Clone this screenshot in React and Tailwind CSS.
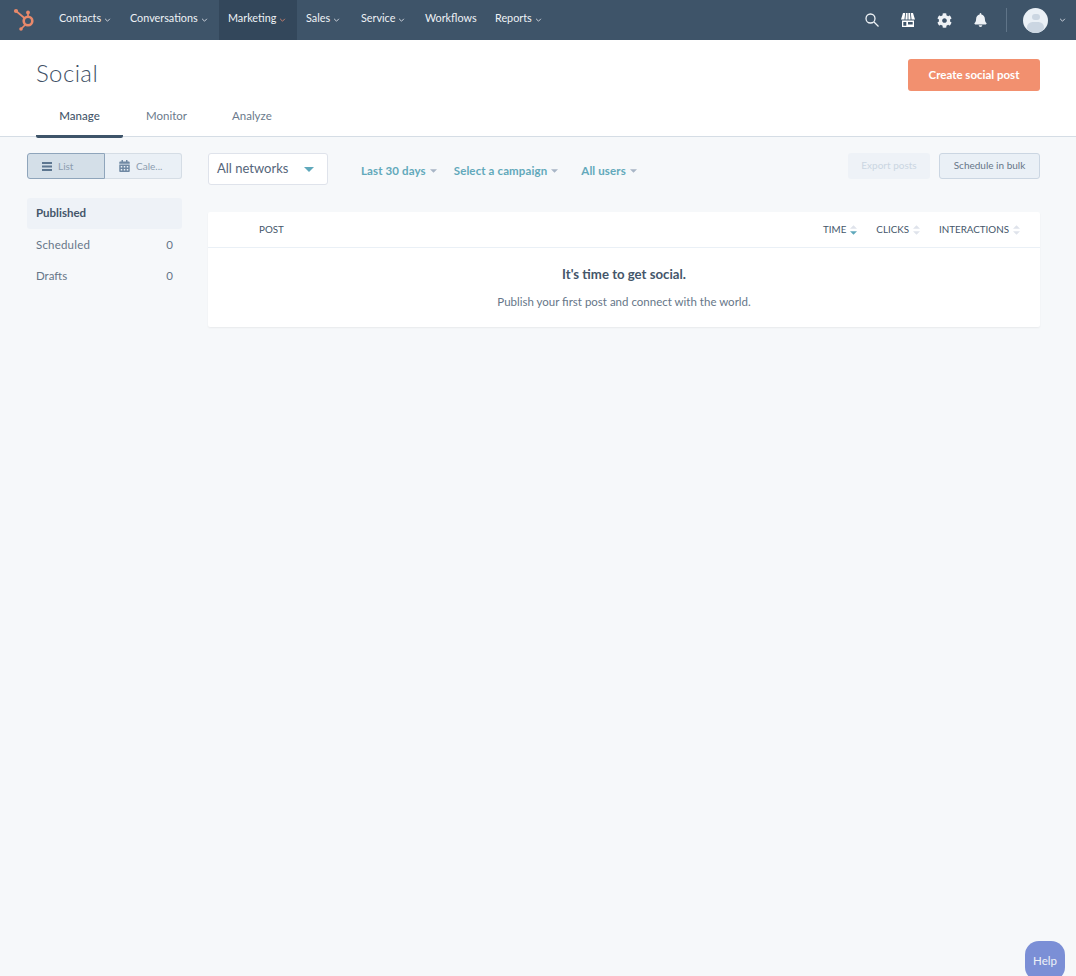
import { FaCog, FaBell, FaCalendarAlt } from "react-icons/fa"

const navItems = [
  { label: "Contacts", w: "w-[71px]", caret: true },
  { label: "Conversations", w: "w-[98px]", caret: true },
  { label: "Marketing", w: "w-[78px]", caret: true, active: true },
  { label: "Sales", w: "w-[55px]", caret: true },
  { label: "Service", w: "w-[64px]", caret: true },
  { label: "Workflows", w: "w-[70px]" },
  { label: "Reports", w: "w-[66px]", caret: true },
]

function Chevron({ className }) {
  return (
    <svg viewBox="0 0 8 5" className={"w-[7px] h-[4px] " + className} fill="none" stroke="currentColor" strokeWidth="1.1">
      <path d="M1 1l3 3 3-3" />
    </svg>
  )
}

function Caret({ className }) {
  return (
    <svg viewBox="0 0 10 5" className={className} fill="currentColor">
      <path d="M0 0h10L5 5z" />
    </svg>
  )
}

// up/down arrows next to table headers
function SortArrows({ down }) {
  return (
    <span className="flex flex-col gap-[2px] ml-[4px]">
      <svg viewBox="0 0 8 4" className="w-[7px] h-[4px] text-[#dfe3eb]" fill="currentColor"><path d="M4 0l4 4H0z" /></svg>
      <svg viewBox="0 0 8 4" className={"w-[7px] h-[4px] " + (down ? "text-[#5fa8bb]" : "text-[#dfe3eb]")} fill="currentColor"><path d="M0 0h8L4 4z" /></svg>
    </span>
  )
}

function Sprocket() {
  return (
    <svg viewBox="0 0 22 24" className="w-[22px] h-[24px] text-[#e8896b]" fill="none" stroke="currentColor">
      <circle cx="15" cy="13" r="4.300" strokeWidth="2.600" />
      <path d="M3 3l9 7.500M15 4.500v5M8 21l4-4" strokeWidth="1.700" />
      <circle cx="3" cy="3" r="2.100" fill="currentColor" stroke="none" />
      <circle cx="15" cy="4.500" r="1.900" fill="currentColor" stroke="none" />
      <circle cx="8" cy="21" r="1.800" fill="currentColor" stroke="none" />
    </svg>
  )
}

function Store() {
  return (
    <svg viewBox="0 0 14 14" className="w-[14px] h-[14px] text-white" fill="currentColor">
      <path d="M2 0h2.200L3.500 6.500H0zM5 0h1.600v6.500H4.400zM7.400 0H9l.6 6.500H7.400zM9.800 0H12l2 6.500h-3.500z" />
      <path fillRule="evenodd" d="M1 7.500h12V14H1zM2.300 9v3.800h3V9zM7 9v2.600h4.700V9z" />
    </svg>
  )
}

function Avatar() {
  return (
    <span className="w-[25px] h-[25px] rounded-full bg-[#eaf0f6] overflow-hidden flex flex-col items-center">
      <span className="w-[8px] h-[8px] rounded-full bg-[#cbd6e2] mt-[6px]" />
      <span className="w-[17px] h-[12px] rounded-full bg-[#cbd6e2] mt-[2px]" />
    </span>
  )
}

function TopNav() {
  return (
    <nav className="h-[40px] bg-[#3e5469] flex items-stretch text-[#eef2f6] text-[10.8px] shrink-0">
      <div className="w-[50px] flex items-center pl-[13px]">
        <Sprocket />
      </div>
      {navItems.map((item) => (
        <a key={item.label} className={"flex items-center pl-[9px] gap-[3px] " + item.w + (item.active ? " bg-[#33475b]" : "")}>
          <span className="-mt-[4px]">{item.label}</span>
          {item.caret && <Chevron className={item.active ? "text-[#d9866f] -mt-[1px]" : "text-[#dfe3eb] -mt-[1px]"} />}
        </a>
      ))}
      <div className="ml-auto flex items-center">
        <svg viewBox="0 0 14 14" className="w-[14px] h-[14px] mr-[22px]" fill="none" stroke="currentColor" strokeWidth="1.300">
          <circle cx="5.500" cy="5.500" r="4.500" />
          <path d="M9 9l4.500 4.500" />
        </svg>
        <span className="mr-[22px]"><Store /></span>
        <FaCog className="w-[15px] h-[15px] mr-[22px]" />
        <FaBell className="w-[13px] h-[14px] mr-[19px]" />
        <span className="w-px h-[24px] bg-[#5f7488] mr-[16px]" />
        <Avatar />
        <Chevron className="text-[#dfe3eb] ml-[11px] mr-[10px]" />
      </div>
    </nav>
  )
}

function PageHeader() {
  return (
    <header className="bg-white h-[97px] border-b border-[#d5dde5] shrink-0 pl-[36px] pr-[36px]">
      <div className="flex justify-between items-start pt-[19px] h-[61px]">
        <h1 className="text-[24px] leading-[28px] font-light text-[#3f5166] tracking-[0.4px]">Social</h1>
        <button className="w-[132px] h-[32px] bg-[#f2906f] rounded-[3px] text-white text-[11.5px] font-bold">Create social post</button>
      </div>
      <div className="flex h-[36px] text-[11.5px]">
        <a className="w-[87px] flex justify-center pt-[6px] h-[37px] border-b-[3px] border-[#3e5469] rounded-b-[2px] text-[#44566a] font-medium">Manage</a>
        <a className="ml-[23px] pt-[6px] text-[#6b7a8c]">Monitor</a>
        <a className="ml-[45px] pt-[6px] text-[#6b7a8c]">Analyze</a>
      </div>
    </header>
  )
}

function Sidebar() {
  return (
    <aside className="w-[155px] shrink-0 text-[11.5px]">
      <div className="flex h-[26px] text-[10px] text-[#8c9db0]">
        <button className="w-[78px] flex items-center gap-[6px] bg-[#d4dfe8] border border-[#8fa5bb] rounded-l-[3px] pl-[14px]">
          <svg viewBox="0 0 10 9" className="w-[10px] h-[9px] text-[#5d7690]" fill="currentColor">
            <path d="M0 0h10v2H0zM0 3.500h10v2H0zM0 7h10v2H0z" />
          </svg>
          List
        </button>
        <button className="w-[77px] flex items-center gap-[6px] bg-[#eaf0f6] border border-l-0 border-[#d5dde5] rounded-r-[3px] pl-[14px]">
          <FaCalendarAlt className="w-[11px] h-[12px] text-[#6f88a3]" />
          Cale...
        </button>
      </div>
      <ul className="mt-[19px] text-[#667688]">
        <li className="h-[31px] bg-[#eef2f7] rounded-[3px] flex items-center px-[9px] pb-[2px] font-bold text-[#44566a]">Published</li>
        <li className="h-[31px] flex items-center justify-between px-[9px] pb-[2px] mt-[1px] tracking-[0.2px]">Scheduled<span>0</span></li>
        <li className="h-[31px] flex items-center justify-between px-[9px] pb-[2px]">Drafts<span>0</span></li>
      </ul>
    </aside>
  )
}

function Toolbar() {
  return (
    <div className="flex h-[32px]">
      <button className="w-[120px] h-[32px] bg-white border border-[#dfe3eb] rounded-[3px] flex items-center justify-between pl-[8px] pr-[13px] text-[13px] text-[#55657a]">
        All networks
        <Caret className="w-[10px] h-[5px] text-[#5fa8bb]" />
      </button>
      <div className="flex items-center ml-[33px] text-[11.5px] font-bold text-[#62a9bb] mt-[5px] h-[26px] tracking-[0.12px]">
        <a className="flex items-center gap-[4px]">Last 30 days<Caret className="w-[7px] h-[4px] text-[#a8b6c6]" /></a>
        <a className="flex items-center gap-[4px] ml-[17px]">Select a campaign<Caret className="w-[7px] h-[4px] text-[#a8b6c6]" /></a>
        <a className="flex items-center gap-[4px] ml-[23px]">All users<Caret className="w-[7px] h-[4px] text-[#a8b6c6]" /></a>
      </div>
      <div className="ml-auto flex text-[10px] h-[26px]">
        <button className="w-[82px] bg-[#eef2f7] rounded-[3px] text-[#cbd6e2] pb-[2px]">Export posts</button>
        <button className="w-[101px] ml-[9px] bg-[#eaf0f6] border border-[#cbd6e2] rounded-[3px] text-[#667688] pb-[2px]">Schedule in bulk</button>
      </div>
    </div>
  )
}

function PostsTable() {
  return (
    <section className="mt-[27px] bg-white shadow-[0_1px_2px_rgba(0,0,0,0.06)] rounded-[2px]">
      <div className="h-[36px] border-b border-[#eaf0f6] flex items-center pl-[51px] text-[9.800px] text-[#44566a]">
        <span className="mr-auto">POST</span>
        <span className="flex items-center">TIME<SortArrows down /></span>
        <span className="flex items-center ml-[19px]">CLICKS<SortArrows /></span>
        <span className="flex items-center ml-[19px] mr-[20px]">INTERACTIONS<SortArrows /></span>
      </div>
      <div className="h-[79px] flex flex-col items-center pt-[18px]">
        <p className="text-[13.200px] font-bold text-[#44566a] leading-[16px]">It's time to get social.</p>
        <p className="text-[11.500px] text-[#667688] leading-[16px] mt-[12px]">Publish your first post and connect with the world.</p>
      </div>
    </section>
  )
}

export default function App() {
  return (
    <div className="h-[976px] bg-[#f6f8fa] flex flex-col overflow-hidden relative font-['Lato',sans-serif]">
      <TopNav />
      <PageHeader />
      <main className="flex pt-[16px] pl-[27px] pr-[36px]">
        <Sidebar />
        <div className="flex-1 ml-[26px]">
          <Toolbar />
          <PostsTable />
        </div>
      </main>
      <button className="absolute left-[1025px] top-[941px] w-[40px] h-[40px] rounded-[14px] bg-[#7b8fd6] text-[#eef2f6] text-[11.5px]">Help</button>
    </div>
  )
}
